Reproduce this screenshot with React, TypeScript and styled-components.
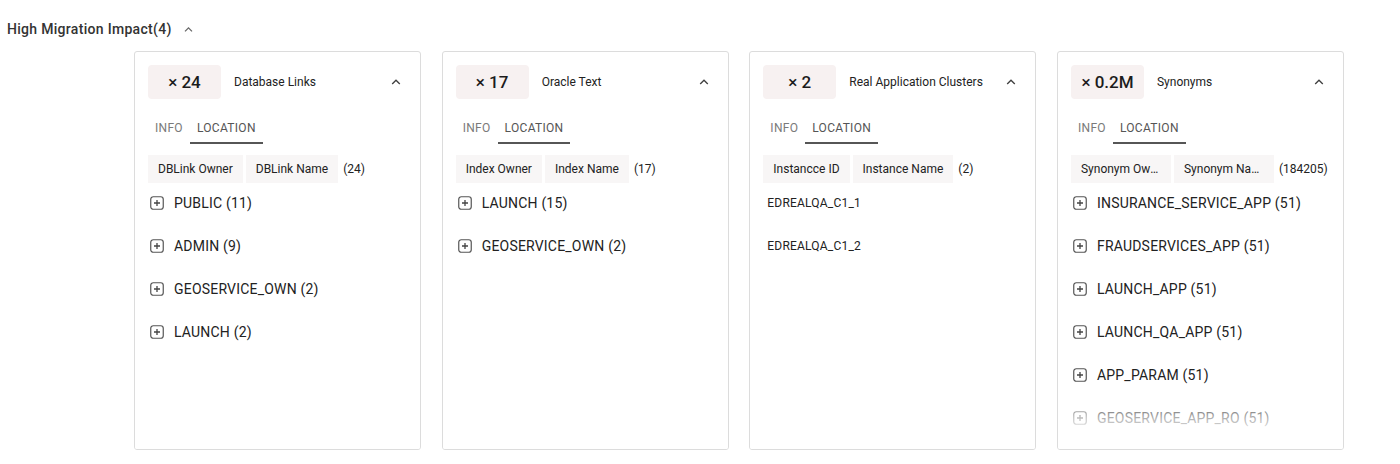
import React from "react";
import styled, { createGlobalStyle } from "styled-components";

const Global = createGlobalStyle`
  html, body { margin: 0; padding: 0; background: #fff; }
  body { font-family: Roboto, "Noto Sans", Arial, sans-serif; color: #1f1f1f; }
`;

const Page = styled.div`
  width: 1400px;
  height: 464px;
  overflow: hidden;
  padding: 19px 0 0 7px;
  box-sizing: border-box;
`;

const SectionHeader = styled.div`
  display: flex;
  align-items: center;
  gap: 11px;
  height: 20px;
  font-size: 14px;
  font-weight: 500;
  color: #333;
  letter-spacing: 0.3px;
`;

const Cards = styled.div`
  display: grid;
  grid-template-columns: repeat(4, 287px);
  column-gap: 20.67px;
  margin: 12px 0 0 127px;
`;

const Card = styled.div`
  height: 399px;
  border: 1px solid #dcdcdc;
  border-radius: 3px;
  box-sizing: border-box;
  padding: 13px 13px 0 13px;
  display: flex;
  flex-direction: column;
  overflow: hidden;
  position: relative;
`;

const CardHead = styled.div`
  display: flex;
  align-items: center;
  height: 34px;
  flex-shrink: 0;
`;

const Badge = styled.div`
  width: 73px;
  height: 34px;
  border-radius: 4px;
  background: #f7f1f1;
  display: flex;
  align-items: center;
  justify-content: center;
  font-size: 17px;
  font-weight: 500;
  color: #1c1c1c;
  flex-shrink: 0;
`;

const CardTitle = styled.div`
  flex: 1;
  margin-left: 13px;
  font-size: 12px;
  color: #222;
`;

const Chevron = styled.span`
  display: flex;
  width: 20px;
  justify-content: center;
  margin-right: 1px;
`;

const Tabs = styled.div`
  display: flex;
  margin-top: 12px;
  height: 33px;
  align-items: stretch;
  flex-shrink: 0;
`;

const Tab = styled.div<{ $active?: boolean }>`
  display: flex;
  align-items: center;
  padding: 0 7px;
  font-size: 12px;
  letter-spacing: 0.3px;
  color: ${(p) => (p.$active ? "#555" : "#7a7a7a")};
  border-bottom: 2px solid ${(p) => (p.$active ? "#565656" : "transparent")};
  box-sizing: border-box;
  padding-top: 2px;
`;

const Columns = styled.div`
  display: flex;
  align-items: center;
  gap: 3px;
  margin-top: 11px;
  height: 28px;
  flex-shrink: 0;
`;

const ColChip = styled.div<{ $clip?: boolean }>`
  height: 28px;
  line-height: 28px;
  padding: 0 10px;
  background: #f8f6f6;
  font-size: 12px;
  color: #222;
  white-space: nowrap;
  max-width: ${(p) => (p.$clip ? "80px" : "none")};
  overflow: hidden;
  text-overflow: ellipsis;
`;

const ColCount = styled.div`
  font-size: 12px;
  color: #222;
  margin-left: 2px;
`;

const List = styled.div`
  display: flex;
  flex-direction: column;
  margin-top: -2px;
  flex: 1;
  min-height: 0;
  overflow: hidden;
`;

const Row = styled.div`
  height: 43px;
  display: flex;
  align-items: center;
  gap: 10px;
  font-size: 14px;
  color: #222;
  letter-spacing: 0.2px;
  flex-shrink: 0;
`;

const PlainRow = styled(Row)`
  font-size: 12px;
  padding-left: 4px;
`;

const Fade = styled.div`
  position: absolute;
  left: 0;
  right: 0;
  bottom: 0;
  height: 56px;
  background: linear-gradient(to bottom, rgba(255,255,255,0) 0%, rgba(255,255,255,0.65) 45%, #fff 80%);
  pointer-events: none;
`;

const PlusIcon = () => (
  <svg width="14" height="14" viewBox="0 0 14 14" style={{ marginLeft: 2, flexShrink: 0 }}>
    <rect x="0.75" y="0.75" width="12.5" height="12.5" rx="2.5" fill="none" stroke="#555" strokeWidth="1.2" />
    <path d="M7 4v6M4 7h6" stroke="#444" strokeWidth="1.3" />
  </svg>
);

const UpIcon = ({ size = 12, color = "#444" }: { size?: number; color?: string }) => (
  <svg width={size} height={size} viewBox="0 0 12 12">
    <path d="M2.2 8 L6 4.2 L9.8 8" fill="none" stroke={color} strokeWidth="1.4" />
  </svg>
);

type CardData = {
  count: string;
  title: string;
  cols: string[];
  total: string;
  items: string[];
  plain?: boolean;
  clip?: boolean;
};

const cards: CardData[] = [
  {
    count: "× 24",
    title: "Database Links",
    cols: ["DBLink Owner", "DBLink Name"],
    total: "(24)",
    items: ["PUBLIC (11)", "ADMIN (9)", "GEOSERVICE_OWN (2)", "LAUNCH (2)"],
  },
  {
    count: "× 17",
    title: "Oracle Text",
    cols: ["Index Owner", "Index Name"],
    total: "(17)",
    items: ["LAUNCH (15)", "GEOSERVICE_OWN (2)"],
  },
  {
    count: "× 2",
    title: "Real Application Clusters",
    cols: ["Instancce ID", "Instance Name"],
    total: "(2)",
    items: ["EDREALQA_C1_1", "EDREALQA_C1_2"],
    plain: true,
  },
  {
    count: "× 0.2M",
    title: "Synonyms",
    cols: ["Synonym Owner", "Synonym Name"],
    total: "(184205)",
    items: [
      "INSURANCE_SERVICE_APP (51)",
      "FRAUDSERVICES_APP (51)",
      "LAUNCH_APP (51)",
      "LAUNCH_QA_APP (51)",
      "APP_PARAM (51)",
      "GEOSERVICE_APP_RO (51)",
    ],
    clip: true,
  },
];

export default function App() {
  return (
    <Page>
      <Global />
      <SectionHeader>
        <span>High Migration Impact(4)</span>
        <UpIcon size={11} color="#666" />
      </SectionHeader>
      <Cards>
        {cards.map((c) => (
          <Card key={c.title}>
            <CardHead>
              <Badge>{c.count}</Badge>
              <CardTitle>{c.title}</CardTitle>
              <Chevron>
                <UpIcon />
              </Chevron>
            </CardHead>
            <Tabs>
              <Tab>INFO</Tab>
              <Tab $active>LOCATION</Tab>
            </Tabs>
            <Columns>
              {c.cols.map((col) => (
                <ColChip key={col} $clip={c.clip}>
                  {col}
                </ColChip>
              ))}
              <ColCount>{c.total}</ColCount>
            </Columns>
            <List>
              {c.items.map((it) =>
                c.plain ? (
                  <PlainRow key={it}>{it}</PlainRow>
                ) : (
                  <Row key={it}>
                    <PlusIcon />
                    <span>{it}</span>
                  </Row>
                )
              )}
            </List>
            <Fade />
          </Card>
        ))}
      </Cards>
    </Page>
  );
}
